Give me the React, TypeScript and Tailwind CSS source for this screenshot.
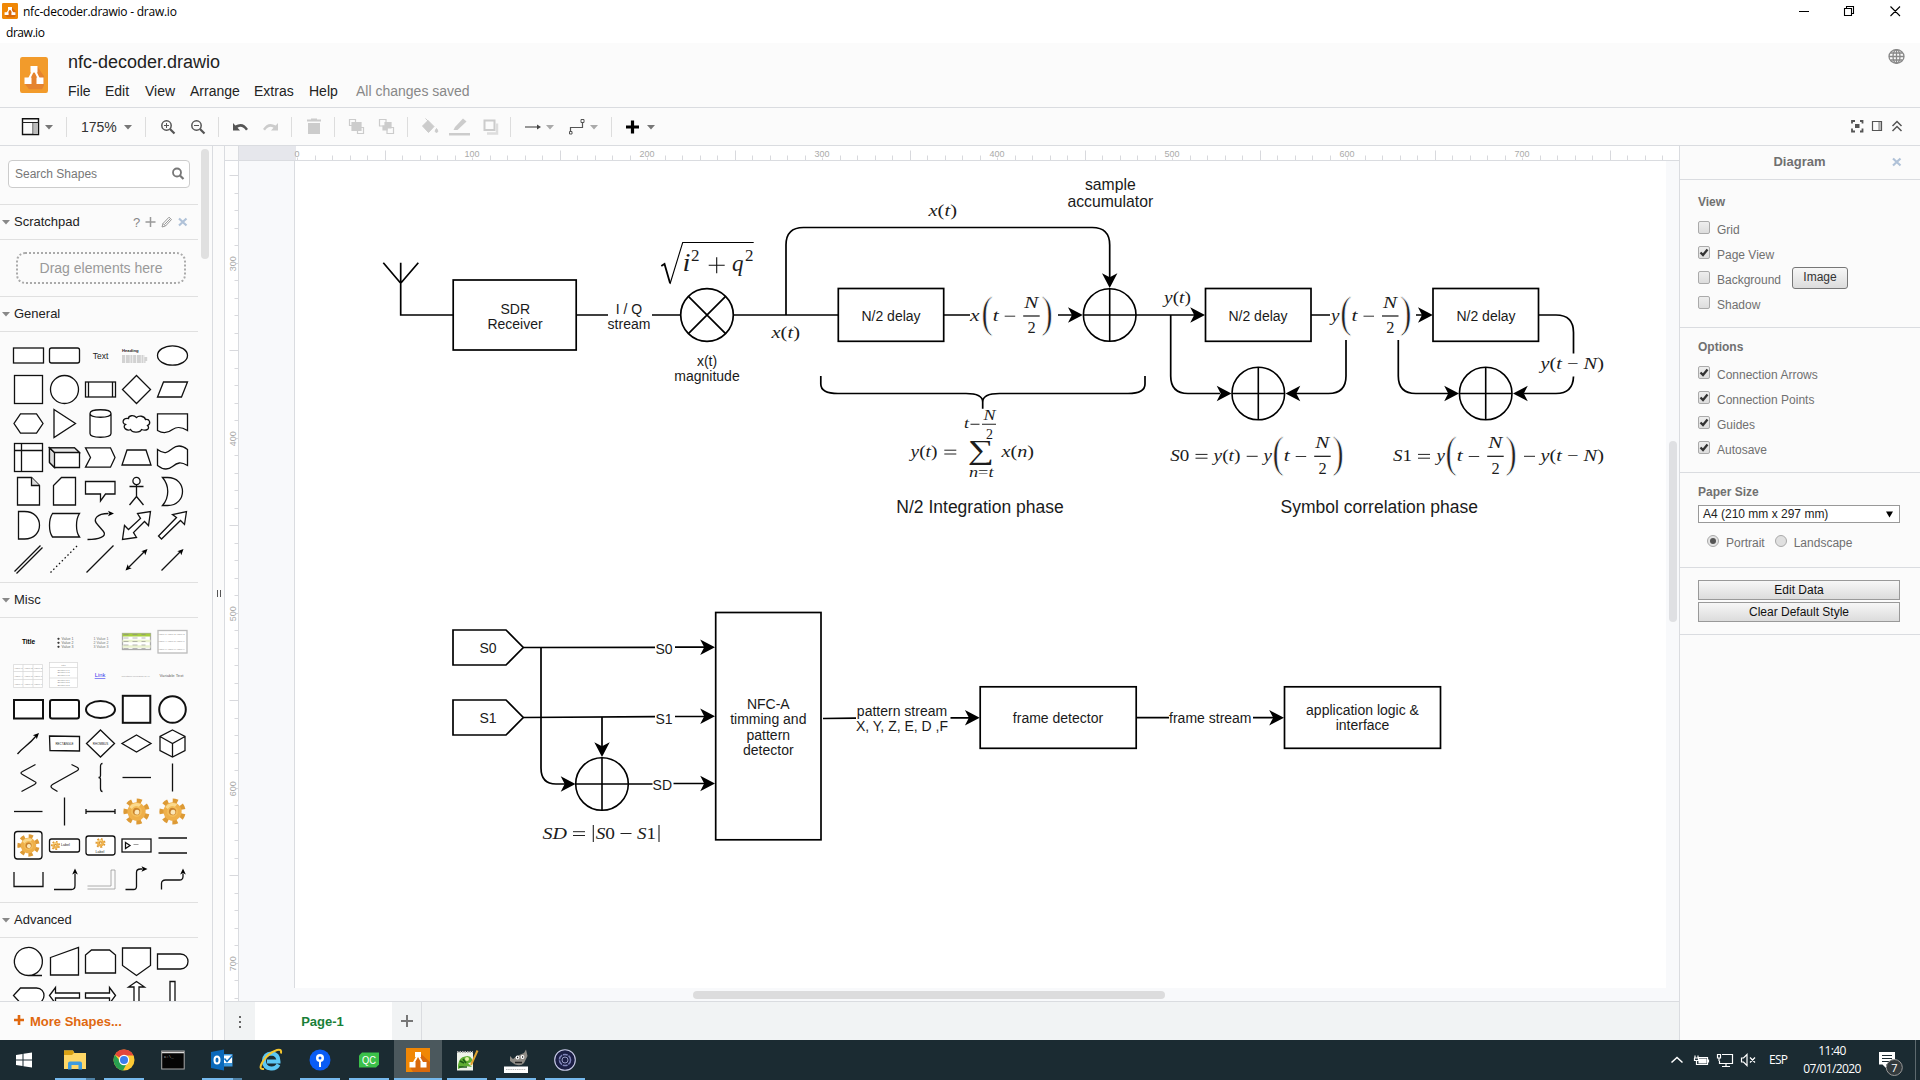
import React from "react";

const sans = "font-['Liberation_Sans',Arial,sans-serif]";

/* ---------- sidebar shape previews ---------- */

function Tip({ x, y, a, s = 1 }: { x: number; y: number; a: number; s?: number }) {
  return <path d="M0 0L-6 -2.8L-4.6 0L-6 2.8Z" fill="#000" stroke="none" transform={`translate(${x} ${y}) rotate(${a}) scale(${s})`} />;
}

function Gear({ x = 0, y = 0, s = 1 }: { x?: number; y?: number; s?: number }) {
  return (
    <g transform={`translate(${x} ${y}) scale(${s}) rotate(12)`} stroke="none">
      <circle r="10.4" fill="none" stroke="#dd9a35" strokeWidth="5.4" strokeDasharray="4.8 4.535" />
      <circle r="9.2" fill="#efb04a" />
      <path d="M-8 -3A8.6 8.6 0 0 1 3 -8L1 -4A5 5 0 0 0 -4 -1Z" fill="#fbd98c" />
      <circle r="5.4" fill="#f3bd5a" />
      <circle r="3.6" fill="#c9822c" />
      <circle cx=".6" cy=".6" r="2.4" fill="#fbe7b8" />
    </g>
  );
}

const tiny = { fill: "#222", stroke: "none", fontFamily: "Liberation Sans, sans-serif" } as const;

const general: React.ReactNode[] = [
  <rect x="-15" y="-7.5" width="30" height="15" />,
  <rect x="-15" y="-7.5" width="30" height="15" rx="2" />,
  <text {...tiny} fontSize="8.5" x="0" y="3" textAnchor="middle">Text</text>,
  <g><text {...tiny} fontSize="4.2" fontWeight="bold" x="-14.5" y="-4">Heading</text><path d="M-14.500.5H8M-14.500 2.500H11M-14.500 4.500H11.500M-14.500 6.500H9" stroke="#888" strokeWidth=".7" strokeDasharray="3 .8 4 .6 2 .7" /></g>,
  <ellipse rx="15" ry="9.700" />,
  <rect x="-14" y="-14" width="28" height="28" />,
  <circle r="14" />,
  <g><rect x="-15" y="-7.5" width="30" height="15" /><path d="M-12 -7.500V7.500M12 -7.500V7.500" /></g>,
  <path d="M0 -14L14 0L0 14L-14 0Z" />,
  <path d="M-9 -7.500H15L9 7.500H-15Z" />,
  <path d="M-8 -9.700H8L14.500 0L8 9.700H-8L-14.500 0Z" />,
  <path d="M-10.500 -14L11 0L-10.500 14Z" />,
  <path d="M-10.500 -10C-10.500 -15 10.500 -15 10.500 -10V10C10.500 15 -10.500 15 -10.500 10ZM-10.500 -10C-10.500 -5 10.500 -5 10.500 -10" />,
  <path d="M-8 -5C-14 -6 -15 0 -11 1C-15 4 -9 8 -6 6C-4 10 4 9 5 6C10 8 14 5 11 2C15 0 13 -5 9 -4C8 -8 2 -8 0 -6C-3 -9 -8 -8 -8 -5Z" />,
  <path d="M-15 -9.700H15V7C7 2 3 4 0 6C-5 10 -10 10 -15 7Z" />,
  <g><rect x="-14" y="-14" width="28" height="28" /><path d="M-7 -14V14M-14 -7H14" /></g>,
  <g><path d="M-15 -9.700H10L15 -5V10H-10L-15 5Z" /><path d="M-15 -9.700L-10 -5V10L-15 5Z" fill="#ddd" /><path d="M-15 -9.700H10L15 -5H-10Z" fill="#e8e8e8" /></g>,
  <path d="M-15 -9.700H10L14.500 0L10 9.700H-15L-10 0Z" />,
  <path d="M-9.500 -7.500H9.500L14.500 7.500H-14.500Z" />,
  <path d="M-15 -8C-7 -2 -4 -6 0 -9C5 -13 10 -12 15 -8V8C8 4 5 5 0 9C-5 13 -10 12 -15 8Z" />,
  <g><path d="M-11 -14H3L11 -6V13.500H-11Z" /><path d="M3 -14V-6H11" fill="#ddd" /></g>,
  <path d="M-3 -14H11V13.500H-11V-6Z" />,
  <path d="M-15 -10H14.500V2.500H5L0 9.500V2.500H-15Z" />,
  <g><circle cy="-10.500" r="3.600" /><path d="M0 -7V5M-7 -5H7M0 5L-7 13.500M0 5L7 13.500" /></g>,
  <path d="M-10 -14H-5C15 -14 15 14 -5 14H-10C-3 6 -3 -6 -10 -14Z" />,
  <path d="M-10 -14H-4C16 -14 16 13.500 -4 13.500H-10Z" />,
  <path d="M-12 -12H15C11 -6 11 6 15 11.500H-12C-16 6 -16 -6 -12 -12Z" />,
  <g><path d="M-13 14C-2 14 7 11 3 6L-3 -1C-8 -6 -4 -12 8 -12" fill="none" /><Tip x={13.500} y={-12} a={0} /></g>,
  <path d="M14 -14L12 0L8 -4L-3 7L0 12L-14 14L-12 0L-8 4L4 -7L1 -12Z" />,
  <path d="M14 -14L12 -1L8 -5L-11 13.500L-14 10.500L4 -8L0 -11Z" />,
  <g><path d="M-14 12L12 -14M-12 14L14 -12" /></g>,
  <path d="M-14 13L13 -14" strokeDasharray="1.500 2.500" />,
  <path d="M-14 13L13 -14" />,
  <g><path d="M-8 8L8 -8" /><Tip x={-11} y={11} a={135} /><Tip x={11} y={-10.500} a={-45} /></g>,
  <g><path d="M-11 11L8 -8" /><Tip x={11} y={-10.500} a={-45} /></g>,
];

const vals = (x: number, y: number, t: string, k: number) => <text key={k} {...tiny} fill="#888" fontSize="2.400" x={x} y={y} textAnchor="middle">{t}</text>;

const misc: React.ReactNode[] = [
  <text {...tiny} fill="#000" fontSize="6.500" fontWeight="bold" x="0" y="2" textAnchor="middle">Title</text>,
  <g>{["Value 1", "Value 2", "Value 3"].map((t, i) => <g key={i}><text {...tiny} fill="#666" fontSize="3.600" x="-3" y={-1.500 + i * 4}>{t}</text><circle cx="-6" cy={-2.700 + i * 4} r="0.400" /></g>)}</g>,
  <g>{["Value 1", "Value 2", "Value 3"].map((t, i) => <text key={i} {...tiny} fill="#777" fontSize="3.600" x="-7" y={-1.500 + i * 4}>{`${i + 1}  ${t}`}</text>)}</g>,
  <g><rect x="-14" y="-8" width="28" height="16" stroke="#aaa" /><path d="M-14 -6.500H14" stroke="#a5cc3f" strokeWidth="3" /><path d="M-14 -.5H14M-14 5H14" stroke="#eaf2cf" strokeWidth="2.500" />{[-7, -3.500, 0, 3.500, 7].map((y) => <path key={y} d={`M-13 ${y}h5M-4 ${y}h5M5 ${y}h4`} stroke="#888" strokeWidth=".6" />)}</g>,
  <g><rect x="-14.500" y="-11" width="29" height="22.500" stroke="#bbb" />{[-7, 0, 8].flatMap((y, r) => [-10, -1, 8].map((x, c) => vals(x, y, `Value ${r * 3 + c + 1}`, r * 3 + c)))}</g>,
  <g><path d="M-15 -11H14V12H-15ZM-5.500 -11V12M4.500 -11V12M-15 -4H14M-15 4H14" stroke="#d4d4d4" strokeWidth=".7" />{[-6.500, 1, 9].flatMap((y, r) => [-10, 0, 9.500].map((x, c) => vals(x, y, `Value ${r * 3 + c + 1}`, r * 3 + c)))}</g>,
  <g><rect x="-15" y="-13" width="28" height="25" stroke="#d4d4d4" strokeWidth=".7" /><path d="M-15 -8H13M-15 2.500H13" stroke="#d4d4d4" strokeWidth=".7" />{["Title", "Section 1.1", "Section 1.2", "Section 1.3", "Section 2.1", "Section 2.2", "Section 2.3"].map((t, i) => vals(-1, [-10, -5, -2.200, .8, 5, 7.800, 10.700][i], t, i))}</g>,
  <text {...tiny} fill="#3333ee" fontSize="5.800" textDecoration="underline" x="-.5" y="1.500" textAnchor="middle">Link</text>,
  <text {...tiny} fill="#999" fontSize="2.200" x="-1" y="1" textAnchor="middle">Timestamp 07/01/2020 11:40</text>,
  <text {...tiny} fill="#666" fontSize="4.200" x="-1" y="1.500" textAnchor="middle">Variable Text</text>,
  <rect x="-14.500" y="-9.500" width="29" height="18.500" strokeWidth="2" />,
  <rect x="-14.500" y="-9.500" width="29" height="18.500" rx="2" strokeWidth="2" />,
  <ellipse rx="14.500" ry="8.500" strokeWidth="2" />,
  <rect x="-13.700" y="-13.700" width="27.500" height="27" strokeWidth="2" />,
  <circle r="13.300" strokeWidth="2" />,
  <g><path d="M-11 10.500C-6 4 0 2 8 -8" /><Tip x={10.500} y={-10.500} a={-45} /></g>,
  <g><path d="M-15 -7.500L15 -7V7.500L-14.500 7Z" /><text {...tiny} fontSize="3" y="1" textAnchor="middle">RECTANGLE</text></g>,
  <g><path d="M0 -13.500L14 0L0 13.500L-14 0Z" /><text {...tiny} fontSize="3" y="1" textAnchor="middle">RHOMBUS</text></g>,
  <path d="M0 -8.500L14.500 0L0 8.500L-14.500 0Z" />,
  <path d="M0 -13.500L12.500 -7V7L0 13.500L-12.500 7V-7ZM-12.500 -7L0 0L12.500 -7M0 0V13.500" />,
  <path d="M7 -13L-6 -6Q-9 -4.500 -6 -3L6 4Q9 5 6 7L-7 14" fill="none" />,
  <path d="M7 -13L13 -10Q15 -8.500 13 -7L-12 7Q-15 9 -12 11L-7 14" fill="none" />,
  <path d="M2 -14Q0 -14 0 -11V-2Q0 0 -2 0Q0 0 0 2V11Q0 14 2 14" fill="none" />,
  <path d="M-14 0H14.500" />,
  <path d="M0 -14V14" />,
  <path d="M-14.500 0H14" />,
  <path d="M0 -14V14" />,
  <path d="M-14.500 0H14.500M-14.500 -2.500V2.500M14.500 -2.500V2.500" />,
  <Gear />,
  <Gear />,
  <g><rect x="-14" y="-14" width="27.500" height="27.500" rx="3" /><Gear s={0.850} /></g>,
  <g><rect x="-15" y="-6.500" width="30" height="13" rx="2" /><Gear x={-9} s={0.350} /><text {...tiny} fontSize="3.600" x="-3.500" y="0">Label</text></g>,
  <g><rect x="-14.500" y="-9.500" width="29" height="19" rx="2.500" /><Gear y={-2.500} s={0.380} /><text {...tiny} fontSize="3.600" x="-5" y="7">Label</text></g>,
  <g><rect x="-14.500" y="-6.500" width="29" height="13" /><path d="M-11 -3L-6.500 0L-11 3Z" /><path d="M-3 -1H2" stroke="#777" strokeWidth=".7" /></g>,
  <path d="M-14 -7.500H14.500M-14 7.500H14.500" />,
  <path d="M-14.500 -7.500V7H14.500V-7.500" fill="none" />,
  <g><path d="M-10.500 10H7Q10.500 10 10.500 6V-6" fill="none" /><Tip x={10.500} y={-11} a={-90} /></g>,
  <path d="M-13 9.500H14.500V-9.500H10.500V6.500H-13" fill="none" stroke="#999" strokeWidth=".8" />,
  <g><path d="M-11 10H-3Q0 10 0 7V-7Q0 -10.500 4 -10.500H6" fill="none" /><Tip x={11} y={-10.500} a={0} /></g>,
  <g><path d="M-11 10V4Q-11 .5 -7 .5H7Q10.500 .5 10.500 -3V-6" fill="none" /><Tip x={10.500} y={-11} a={-90} /></g>,
];

const advanced: React.ReactNode[] = [
  <path d="M13.500 14H0A14 14 0 1 1 6 12.600Q4 14 0 14" />,
  <path d="M-14 -4L14 -14V13.500H-14Z" />,
  <path d="M-9 -11.500H9L15 -6.500V11.500H-15V-6.500Z" />,
  <path d="M-14 -13.500H14V4L0 14L-14 4Z" />,
  <path d="M-15 -7.500H8C18 -7.500 18 7.500 8 7.500H-15Z" />,
  <path d="M-8 -7.500H8C18 -7.500 18 7.500 8 7.500H-8L-15 0Z" />,
  <path d="M-15 0L-9 -8V-2.500H15V2.500H-9V8Z" />,
  <path d="M15 0L9 -8V-2.500H-15V2.500H9V8Z" />,
  <path d="M0 -14L8 -8.500H2.500V14H-2.500V-8.500H-8Z" />,
  <path d="M-2.500 -14V14H2.500V-14Z" />,
];

function ShapeGrid({ items }: { items: React.ReactNode[] }) {
  return (
    <div className="grid w-[198px] grid-cols-[repeat(5,36px)] border-b border-[#e0e0e0] py-1.5 pl-2.5">
      {items.map((s, i) => (
        <svg key={i} width="36" height="34" viewBox="-18.5 -17.5 36 34" fill="#fff" stroke="#111" strokeWidth="1.3" className="block">{s}</svg>
      ))}
    </div>
  );
}

function SectionTitle({ title, children }: { title: string; children?: React.ReactNode }) {
  return (
    <div className="flex h-[35px] w-[198px] shrink-0 items-center border-b border-[#e0e0e0] pl-[2px] text-[13px] text-[#222]">
      <svg width="8" height="5" className="mr-1"><path d="M0 0H8L4 4.500Z" fill="#888" /></svg>
      <span>{title}</span>
      {children}
    </div>
  );
}

function Sidebar() {
  return (
    <aside className="relative flex w-[213px] shrink-0 flex-col border-r border-[#dadce0] bg-[#fbfbfb]">
      <div className="h-[855px] overflow-hidden">
        <div className="flex h-[59px] w-[198px] items-start border-b border-[#e0e0e0] pl-2 pt-[14px]">
          <div className="flex h-7 w-[182px] items-center justify-between rounded border border-[#ccc] bg-white pl-1.5 pr-1 text-[12px] text-[#777]">
            Search Shapes
            <svg width="14" height="14" viewBox="0 0 14 14" fill="none" stroke="#777"><circle cx="6" cy="5.500" r="4" strokeWidth="1.800" /><path d="M9 8.500L12.500 12" strokeWidth="2.200" /></svg>
          </div>
        </div>
        <SectionTitle title="Scratchpad">
          <svg width="60" height="14" className="ml-[52px]" fill="none" stroke="#999">
            <text x="1" y="11.500" fontSize="13" fill="#888" stroke="none">?</text>
            <path d="M13.500 7H23.500M18.500 2V12" strokeWidth="1.500" />
            <path d="M30 12L31 8.500L37 2.200L39.500 4.500L33.500 11Z M31 8.500L33.500 11 M32.500 9.500L38 4" />
            <path d="M47 3.500L54.500 10.500M54.500 3.500L47 10.500" stroke="#b0c2d8" strokeWidth="2.200" />
          </svg>
        </SectionTitle>
        <div className="flex h-[57px] w-[198px] items-center border-b border-[#e0e0e0] pl-4">
          <div className="flex h-8 w-[170px] items-center justify-center rounded-[9px] border-2 border-dotted border-[#aaa] text-[14px] text-[#999]">Drag elements here</div>
        </div>
        <SectionTitle title="General" />
        <ShapeGrid items={general} />
        <SectionTitle title="Misc" />
        <ShapeGrid items={misc} />
        <SectionTitle title="Advanced" />
        <ShapeGrid items={advanced} />
      </div>
      <div className="flex h-[39px] items-center border-t border-[#dadce0] pl-[14px] pt-px text-[13px] font-bold text-[#e0680f]">
        <svg width="10" height="10" className="mb-1 mr-1.5"><path d="M5 0V10M0 5H10" stroke="#e0680f" strokeWidth="2.600" /></svg>
        More Shapes...
      </div>
      <div className="absolute left-[201px] top-[3px] h-[110px] w-2 rounded-full bg-[#e0e0e0]" />
    </aside>
  );
}

/* ---------- diagram ---------- */

/* Math run: letters are set in italics, everything else upright. */
function Mth({ x, y, w, s = 17, children }: { x: number; y: number; w: number; s?: number; children: string }) {
  const runs = children.match(/[A-Za-z]+|[^A-Za-z]+/g) ?? [];
  return (
    <text x={x} y={y} fontSize={s} textLength={w} lengthAdjust="spacingAndGlyphs" fill="#1c1c1c" fontFamily="Liberation Serif, serif" xmlSpace="preserve">
      {runs.map((r, i) => <tspan key={i} fontStyle={/[A-Za-z]/.test(r) ? "italic" : "normal"}>{r}</tspan>)}
    </text>
  );
}

function Lbl({ x, y, s = 14, children }: { x: number; y: number; s?: number; children: string }) {
  return <text x={x} y={y} fontSize={s} textAnchor="middle" fill="#1a1a1a" fontFamily="Liberation Sans, Arial, sans-serif">{children}</text>;
}

function Arrow({ x, y, a = 0 }: { x: number; y: number; a?: number }) {
  return <path d="M0 0L-14.800 -7.700L-10.800 0L-14.800 7.700Z" transform={`translate(${x} ${y}) rotate(${a})`} fill="#000" />;
}

function Plus({ x, y }: { x: number; y: number }) {
  return <g stroke="#000" strokeWidth="1.600" fill="#fff"><circle cx={x} cy={y} r="26.300" /><path d={`M${x - 26.300} ${y}H${x + 26.300}M${x} ${y - 26.300}V${y + 26.300}`} /></g>;
}

/* "( t − N/2 )" with tall parentheses; x is the left edge of the t. */
function Half({ x, y }: { x: number; y: number }) {
  const tall = { fontSize: 45, fontFamily: "Liberation Serif, serif", fill: "#222", stroke: "#fff", strokeWidth: 0.9 } as const;
  return (
    <g transform={`translate(${x} ${y})`}>
      <text {...tall} transform="translate(-11.5 5.900) scale(.78 1)">(</text>
      <Mth x={0} y={0} w={6}>t</Mth>
      <path d="M12 -4.800H22.500" stroke="#333" strokeWidth="1" />
      <Mth x={31.500} y={-13.300} w={14}>N</Mth>
      <path d="M30.500 -5H47" stroke="#111" strokeWidth="1.200" />
      <Mth x={34.700} y={12.300} w={8.200}>2</Mth>
      <text {...tall} transform="translate(48.600 5.900) scale(.78 1)">)</text>
    </g>
  );
}

function Diagram() {
  return (
    <svg width="1371" height="827" viewBox="295 161 1371 827" className="block">
      <g fill="none" stroke="#000" strokeWidth="1.700">
        <path d="M383.300 262.700L400.700 283.300L418.300 262.700M400.700 262.700V315H453" />
        <rect x="453.200" y="280" width="123" height="70" />
        <path d="M576 315H608M652 315H680.500M733.500 315H838.500" />
        <circle cx="707" cy="315" r="26.300" />
        <path d="M688.400 296.400L725.600 333.600M725.600 296.400L688.400 333.600" />
        <path d="M786 315V245Q786 227.500 803.500 227.500H1092.200Q1109.700 227.500 1109.700 245V278" />
        <rect x="838.300" y="288.500" width="105.400" height="52.800" />
        <path d="M943.700 315H970M1058 315H1072M1136 315H1195" />
        <path d="M1170.700 315V376Q1170.700 393.500 1188 393.500H1220" />
        <rect x="1205.500" y="288.500" width="105.500" height="52.800" />
        <path d="M1311 315H1330M1416 315H1422" />
        <path d="M1346 340V376Q1346 393.500 1328.500 393.500H1296M1398.300 340V376Q1398.300 393.500 1415.800 393.500H1449" />
        <rect x="1433" y="288.500" width="105.500" height="52.800" />
        <path d="M1538.300 315H1556Q1573.500 315 1573.500 332.500V353.500M1573.500 376.500Q1573 393.500 1556 393.500H1524" />
        <path d="M820.800 376V384Q820.800 393.500 838 393.500H966Q982.700 393.500 982.700 402V408.700M982.700 402Q982.700 393.500 999.500 393.500H1128Q1145 393.500 1145 384V376" />
        <path d="M453 630H506L523.300 647.500L506 665H453ZM453 700H506L523.300 717.500L506 735H453Z" />
        <path d="M523.300 647.500L655 647.300M675 647.200H705M523.300 717.500L655 716.600M675 716.500H705M628.500 784H652.500M673.500 783.500H705" />
        <path d="M541 647.500V768Q541 784 556 784H565M602 717V747" />
        <rect x="715.700" y="612.500" width="105.300" height="227.300" />
        <path d="M823 718.500L856 718.200M950.500 717.800H970M1136.500 717.700H1169M1253 717.700H1275" />
        <rect x="980.200" y="686.800" width="156" height="61.500" />
        <rect x="1284.500" y="686.800" width="156" height="61.500" />
        <path d="M661.300 266L664.500 264L670 283" strokeWidth="1.800" />
        <path d="M670 284L682.700 242.500H753.700" strokeWidth="1.100" />
      </g>
      <Plus x={1109.700} y={315} /><Plus x={1258.300} y={393.500} /><Plus x={1485.700} y={393.500} /><Plus x={602} y={784} />
      <Arrow x={1109.700} y={288} a={90} /><Arrow x={1082.800} y={315} /><Arrow x={1205} y={315} /><Arrow x={1432.800} y={315} />
      <Arrow x={1231.500} y={393.500} /><Arrow x={1285.500} y={393.500} a={180} /><Arrow x={1459} y={393.500} /><Arrow x={1513} y={393.500} a={180} />
      <Arrow x={715} y={647.200} /><Arrow x={715} y={716.300} /><Arrow x={715} y={783.500} /><Arrow x={575.500} y={784} /><Arrow x={602} y={757} a={90} />
      <Arrow x={979.700} y={717.700} /><Arrow x={1284} y={717.700} />

      <Lbl x={515.300} y={313.500}>SDR</Lbl><Lbl x={515} y={328.500}>Receiver</Lbl>
      <Lbl x={629} y={313.500}>I / Q</Lbl><Lbl x={629} y={328.500}>stream</Lbl>
      <Lbl x={707} y={365.500}>x(t)</Lbl><Lbl x={707} y={380.500}>magnitude</Lbl>
      <Lbl x={1110.300} y={190} s={15.750}>sample</Lbl><Lbl x={1110.300} y={207} s={15.750}>accumulator</Lbl>
      <Lbl x={891} y={321}>N/2 delay</Lbl><Lbl x={1258} y={321}>N/2 delay</Lbl><Lbl x={1486} y={321}>N/2 delay</Lbl>
      <Lbl x={980} y={512.700} s={17.500}>N/2 Integration phase</Lbl><Lbl x={1379.300} y={512.700} s={17.500}>Symbol correlation phase</Lbl>
      <Lbl x={488} y={653}>S0</Lbl><Lbl x={488} y={723}>S1</Lbl>
      <Lbl x={664} y={654}>S0</Lbl><Lbl x={664} y={724}>S1</Lbl><Lbl x={662.300} y={790}>SD</Lbl>
      <Lbl x={768.300} y={708.500}>NFC-A</Lbl><Lbl x={768.300} y={724}>timming and</Lbl><Lbl x={768.300} y={739.500}>pattern</Lbl><Lbl x={768.300} y={755}>detector</Lbl>
      <Lbl x={902} y={716}>pattern stream</Lbl><Lbl x={902} y={731}>X, Y, Z, E, D ,F</Lbl>
      <Lbl x={1058} y={723}>frame detector</Lbl><Lbl x={1210.300} y={723}>frame stream</Lbl>
      <Lbl x={1362.500} y={715}>application logic &amp;</Lbl><Lbl x={1362.500} y={730}>interface</Lbl>

      <Mth x={682.500} y={271.300} w={8} s={25}>i</Mth><Mth x={691} y={260.700} w={8.500} s={17}>2</Mth>
      <path d="M708.700 265.300H724.700M716.700 257.300V273.300" stroke="#111" strokeWidth="1.100" />
      <Mth x={732} y={271.300} w={11.500} s={24}>q</Mth><Mth x={745} y={260.700} w={8.500} s={17}>2</Mth>
      <Mth x={771.500} y={337.500} w={28.500}>x(t)</Mth><Mth x={928.500} y={215.800} w={28.500}>x(t)</Mth>
      <Mth x={970} y={321} w={9.500}>x</Mth><Half x={992.700} y={321} />
      <Mth x={1164} y={302.800} w={27}>y(t)</Mth>
      <Mth x={1331} y={321} w={8.500}>y</Mth><Half x={1351.500} y={321} />
      <Mth x={1540.500} y={368.700} w={63.500}>y(t − N)</Mth>
      <Mth x={910.500} y={457} w={27}>y(t)</Mth>
      <path d="M944.300 450.200H956.300M944.300 454H956.300M1195.500 454.400H1207.500M1195.500 458.200H1207.500M1418 454.400H1430M1418 458.200H1430M573 831.700H585M573 835.500H585" stroke="#222" strokeWidth="1" />
      <path d="M1246.700 456.300H1257.700M1524 456.300H1535M620.500 833.500H631.500" stroke="#222" strokeWidth="1" />
      <Mth x={968} y={459} w={26} s={27}>∑</Mth>
      <Mth x={964} y={427.500} w={5} s={14}>t</Mth>
      <path d="M970.500 424.300H979.500M982 424.300H996" stroke="#222" strokeWidth="1.100" />
      <Mth x={983.500} y={420} w={12} s={14.500}>N</Mth><Mth x={986} y={439} w={7} s={14.500}>2</Mth>
      <Mth x={969} y={476.500} w={24.500} s={14}>n=t</Mth>
      <Mth x={1001.500} y={457} w={32.500}>x(n)</Mth>
      <Mth x={1170.300} y={461.300} w={19}>S0</Mth><Mth x={1213.500} y={461.300} w={27}>y(t)</Mth><Mth x={1263.500} y={461.300} w={8.500}>y</Mth><Half x={1283.700} y={461.300} />
      <Mth x={1393} y={461.300} w={19}>S1</Mth><Mth x={1436.500} y={461.300} w={8.500}>y</Mth><Half x={1456.700} y={461.300} /><Mth x={1540.500} y={461.300} w={63.500}>y(t − N)</Mth>
      <Mth x={542.500} y={838.500} w={24.500}>SD</Mth><Mth x={595.700} y={838.500} w={19.300}>S0</Mth><Mth x={637} y={838.500} w={19}>S1</Mth>
      <path d="M593.300 825V842M659 825V842" stroke="#222" strokeWidth="1.100" />
    </svg>
  );
}

/* ---------- canvas with rulers ---------- */

function HRuler() {
  const ticks = Array.from({ length: 79 }, (_, i) => i);
  return (
    <svg width="1440" height="14" viewBox="239 146 1440 14" className="block bg-white">
      <rect x="239" y="146" width="57" height="14" fill="#e6e7ec" />
      {ticks.map((i) => <path key={i} d={`M${Math.round(297 + i * 17.5) + 0.5} ${i % 10 === 5 ? 150.500 : i % 10 === 0 ? 157.500 : 155.500}V160`} stroke="#d8d9dd" />)}
      {[0, 1, 2, 3, 4, 5, 6, 7].map((i) => <text key={i} x={297 + i * 175} y="156.500" fontSize="9" fill="#aaa" textAnchor="middle" fontFamily="Liberation Sans">{i * 100}</text>)}
    </svg>
  );
}

function VRuler() {
  const ticks = Array.from({ length: 48 }, (_, i) => i);
  return (
    <svg width="13" height="840" viewBox="225 161 13 840" className="block">
      {ticks.map((i) => <path key={i} d={`M${i % 10 === 0 ? 229.500 : i % 10 === 5 ? 236 : 234.500} ${Math.floor(175.5 + i * 17.5) + 0.5}H238`} stroke="#d8d9dd" />)}
      {[0, 1, 2, 3, 4].map((i) => <text key={i} transform={`translate(235.500 ${263.700 + i * 175}) rotate(-90)`} fontSize="9" fill="#aaa" textAnchor="middle" fontFamily="Liberation Sans">{300 + i * 100}</text>)}
    </svg>
  );
}

function Canvas() {
  return (
    <main className="flex w-[1454px] shrink-0 flex-col">
      <div className="flex h-[15px] shrink-0 border-b border-[#dadce0]">
        <div className="w-[14px] shrink-0 border-r border-[#dadce0] bg-[#fbfbfb]" />
        <HRuler />
      </div>
      <div className="relative flex h-[840px] shrink-0">
        <div className="w-[14px] shrink-0 border-r border-[#dadce0] bg-white"><VRuler /></div>
        <div className="grow bg-[#f8f9fb] pl-[55px]">
          <div className="h-[827px] w-[1372px] border-l border-[#dadce0] bg-white"><Diagram /></div>
        </div>
        <div className="absolute left-[1444px] top-[280px] h-[181px] w-2 rounded-full bg-[#dfe0e3]" />
        <div className="absolute left-[468px] top-[830px] h-2 w-[472px] rounded-full bg-[#dcdcdd]" />
      </div>
      <div className="flex h-[39px] border-t border-[#dadce0] bg-[#f1f3f4] text-[13px]">
        <div className="flex w-[30px] items-center justify-center pt-px">
          <svg width="4" height="14"><path d="M1 1h2v2h-2ZM1 6h2v2h-2ZM1 11h2v2h-2Z" fill="#666" /></svg>
        </div>
        <div className="flex w-[137px] items-center justify-center bg-white pr-0.5 pt-px font-bold text-[#188038]">Page-1</div>
        <div className="flex w-[30px] items-center justify-center border-r border-[#dadce0]">
          <svg width="13" height="12"><path d="M7 0V12M1 6H13" stroke="#777" strokeWidth="2" /></svg>
        </div>
      </div>
    </main>
  );
}

/* ---------- format panel ---------- */

function Check({ on, label, children }: { on?: boolean; label: string; children?: React.ReactNode }) {
  return (
    <div className="flex h-[25px] items-center">
      <span className="mb-1 flex h-[13px] w-3 items-center justify-center rounded-[2px] border border-[#aaa] bg-gradient-to-b from-[#eee] to-[#ddd]">
        {on && <svg width="10" height="9" fill="none" stroke="#333"><path d="M1.500 4.500L4 7L8.500 1.500" strokeWidth="2.300" /></svg>}
      </span>
      <span className="ml-[7px] pt-px">{label}</span>
      {children}
    </div>
  );
}

const btn = "flex h-5 w-[202px] items-center justify-center border border-[#999] bg-gradient-to-b from-[#f7f7f7] to-[#dcdcdc] text-[#111]";

function FormatPanel() {
  return (
    <aside className="grow border-l border-[#dadce0] bg-[#fbfbfb] text-[12px] text-[#707070]">
      <div className="flex h-[34px] items-center border-b border-[#dadce0] pb-0.5 text-[13px] font-bold">
        <span className="w-[240px] pl-[21px] pr-[22px] text-center">Diagram</span>
        <svg width="10" height="10" className="-ml-[28px]"><path d="M1 1.500L8.500 8.500M8.500 1.500L1 8.500" stroke="#b0c2d8" strokeWidth="2.200" /></svg>
      </div>
      <section className="h-[148px] border-b border-[#dadce0] pl-[18px] pt-[15px]">
        <h3 className="mb-[7px] h-[15px] font-bold leading-[15px]">View</h3>
        <Check label="Grid" />
        <Check label="Page View" on />
        <Check label="Background">
          <span className="-mt-[3px] ml-[11px] flex h-[22px] w-14 items-center justify-center rounded-[3px] border border-[#777] bg-gradient-to-b from-[#f7f7f7] to-[#dcdcdc] pb-[3px] text-[#333]">Image</span>
        </Check>
        <Check label="Shadow" />
      </section>
      <section className="h-[145px] border-b border-[#dadce0] pl-[18px] pt-3">
        <h3 className="mb-[7px] h-[15px] font-bold leading-[15px]">Options</h3>
        <Check label="Connection Arrows" on />
        <Check label="Connection Points" on />
        <Check label="Guides" on />
        <Check label="Autosave" on />
      </section>
      <section className="h-[95px] border-b border-[#dadce0] pl-[18px] pt-3">
        <h3 className="mb-[5px] h-[15px] font-bold leading-[15px]">Paper Size</h3>
        <div className="flex h-[18px] w-[202px] items-center justify-between border border-[#999] bg-white pl-1 pr-1.5 text-[#222]">
          A4 (210 mm x 297 mm)
          <svg width="7" height="7"><path d="M0 .5H7L3.500 6.500Z" fill="#000" /></svg>
        </div>
        <div className="flex h-10 items-center pl-[9px]">
          <span className="mb-1 mr-[7px] flex size-3 items-center justify-center rounded-full border border-[#aaa] bg-[#e4e4e4]"><span className="size-1.5 rounded-full bg-[#555]" /></span>
          Portrait
          <span className="mb-1 ml-[10px] mr-[7px] size-3 rounded-full border border-[#aaa] bg-[#e0e0e0]" />
          Landscape
        </div>
      </section>
      <section className="flex h-[67px] flex-col gap-0.5 border-b border-[#dadce0] pl-[18px] pt-3">
        <div className={btn}>Edit Data</div>
        <div className={btn}>Clear Default Style</div>
      </section>
    </aside>
  );
}

/* ---------- header ---------- */

function Logo({ className, light }: { className: string; light?: boolean }) {
  return (
    <svg viewBox="0 0 28 28" preserveAspectRatio="none" className={className}>
      <rect width="28" height="28" rx="2" fill={light ? "#f29b2b" : "#f08705"} />
      <path d="M17 7L24 15V22L22 25H9L5 21L14 12Z" fill={light ? "#e5832f" : "#d9690c"} />
      <path d="M14 9L8.500 18M14 9L19.500 18" stroke="#fff" strokeWidth="2" />
      <path d="M10.500 7h7v5h-7ZM4.500 16h7v5h-7ZM16.500 16h7v5h-7Z" fill="#fff" />
    </svg>
  );
}

function Toolbar() {
  const g = "#ccc";
  return (
    <div className="h-[38px] shrink-0 border-b border-[#dadce0] bg-[#fbfbfb]">
      <div className="flex h-full items-center text-[14px] text-[#333]">
        <svg width="81" height="37" viewBox="0 108 81 37" fill="none">
          <path d="M22.500 118.700H38.500V134.500H22.500Z" stroke="#111" strokeWidth="1.400" /><path d="M22 122.500H39M33 122V134" stroke="#222" /><rect x="33.500" y="123" width="4.500" height="11" fill="#bbb" />
          <path d="M45 125H53L49 129.500Z" fill="#777" /><path d="M66.500 117V137" stroke="#ddd" />
        </svg>
        <span className="w-[39px] pt-px">175%</span>
        <svg width="540" height="37" viewBox="120 108 540 37" fill="none">
          <path d="M124 125H132L128 129.500Z M647 125H655L651 129.500Z" fill="#777" />
          <path d="M546 125H554L550 129.500Z M590 125H598L594 129.500Z" fill="#aaa" />
          <path d="M145.500 117V137M218.500 117V137M291.500 117V137M334.500 117V137M407.500 117V137M510.500 117V137M611.500 117V137" stroke="#ddd" />
          <g stroke="#555"><circle cx="166.500" cy="125.500" r="4.700" strokeWidth="1.500" /><path d="M170 129L174.500 133.500" strokeWidth="2.200" /><path d="M164 125.500H169M166.500 123V128" />
            <circle cx="196.500" cy="125.500" r="4.700" strokeWidth="1.500" /><path d="M200 129L204.500 133.500" strokeWidth="2.200" /><path d="M194 125.500H199" /></g>
          <path d="M233 123L235.300 125.500Q243 121 248 129L246 130.500Q242 125 237.500 127.800L240 130.500H233Z" fill="#555" />
          <path d="M278 123L275.700 125.500Q268 121 263 129L265 130.500Q269 125 273.500 127.800L271 130.500H278Z" fill={g} />
          <path d="M307 119.500H311V118.500H317V119.500H321V121.500H307ZM308 123H320V134H308Z" fill={g} />
          <g stroke={g} strokeWidth="1.200"><path d="M349.500 119.500H355.500V125.500H349.500ZM357.500 127.500H363.500V133.500H357.500Z" /><path d="M352 122.500H361V130.500H352Z" fill={g} /><path d="M379.500 119.500H386V126H379.500ZM387 127.500H393.500V133.500H387Z" /><path d="M385 122.500H391V128H385ZM383 126H387V130H383Z" fill={g} /></g>
          <path d="M422.500 126L428 120.500L434 126.500L428.500 132.500ZM436.500 128.500Q439 132 436.500 132.500Q434 132 436.500 128.500ZM425.500 118.500L430 123" fill={g} stroke={g} />
          <path d="M449 133H470V135.500H449Z" fill={g} /><path d="M453.500 130L455 127L463 118.500L466.500 121.500L457.500 130Z" fill={g} />
          <path d="M484.500 120.500H494.500V130H484.500Z" stroke={g} strokeWidth="2" /><path d="M497 123.500V133.500H487" stroke="#ddd" strokeWidth="2.500" />
          <path d="M525 127H539" stroke="#555" strokeWidth="1.200" /><path d="M541 127L537 124.500V129.500Z" fill="#444" />
          <path d="M570.500 131V127.500H582.500V123" stroke="#555" strokeWidth="1.200" /><path d="M569.500 131.500H572V134H569.500ZM581 119.500H584V122.500H581Z" stroke="#555" fill="#fff" />
          <path d="M632.500 120.500V133.500M626 127H639" stroke="#000" strokeWidth="3.200" />
        </svg>
        <svg width="70" height="37" viewBox="1850 108 70 37" fill="none" className="ml-auto" stroke="#555">
          <path d="M1852 123.500V121H1855M1860 121H1862.500V123.500M1862.500 128.500V131.500H1860M1855 131.500H1852V128.500" strokeWidth="1.800" /><rect x="1855.500" y="124.500" width="3.500" height="3" fill="#555" />
          <path d="M1872.500 121.500H1881.500V130.500H1872.500Z" strokeWidth="1.200" /><path d="M1879.500 122V130" stroke="#aaa" strokeWidth="2.500" />
          <path d="M1892.500 126L1897 121.500L1901.500 126M1892.500 131L1897 126.500L1901.500 131" strokeWidth="1.500" />
        </svg>
      </div>
    </div>
  );
}

function Header() {
  return (
    <>
      <div className="flex h-[22px] shrink-0 items-center bg-white pl-[2px] pt-px font-['Open_Sans',sans-serif] text-[12px] text-black">
        <Logo className="mb-px mr-[5px] size-4" />
        <span className="tracking-[-0.24px]">nfc-decoder.drawio - draw.io</span>
        <svg width="120" height="20" className="mb-px ml-auto mr-1 shrink-0" viewBox="1796 0 120 20" fill="none" stroke="#000" strokeWidth="1.100">
          <path d="M1799 10.500H1809M1844.500 7.500H1851.500V14.500H1844.500ZM1846.500 7.500V5.500H1853.500V12.500H1851.500M1890.500 5.500L1900 15M1900 5.500L1890.500 15" />
        </svg>
      </div>
      <div className="flex h-[21px] shrink-0 items-center bg-white pl-1.5 pt-px font-['Open_Sans',sans-serif] text-[12px] tracking-[-0.45px] text-black">draw.io</div>
      <header className="flex h-[65px] shrink-0 border-b border-[#dadce0] bg-[#fbfbfb]">
        <Logo className="ml-5 mt-[14px] h-9 w-7" light />
        <div className="ml-5 pt-[8px] text-[#222]">
          <div className="h-[22px] text-[18px] leading-[22px]">nfc-decoder.drawio</div>
          <nav className="mt-2 flex h-5 items-center text-[14px]">
            <span className="w-[37px]">File</span><span className="w-[40px]">Edit</span><span className="w-[45px]">View</span><span className="w-[64px]">Arrange</span><span className="w-[55px]">Extras</span><span className="w-[47px]">Help</span>
            <span className="text-[#888]">All changes saved</span>
          </nav>
        </div>
        <svg width="17" height="15" className="ml-auto mr-[15px] mt-1.5" fill="none" stroke="#888" strokeWidth="1.300"><ellipse cx="8.500" cy="7.500" rx="7.500" ry="6.800" /><ellipse cx="8.500" cy="7.500" rx="3.500" ry="6.800" /><path d="M8.500 1V14M1 7.500H16M2.500 4H14.500M2.500 11H14.500" /></svg>
      </header>
      <Toolbar />
    </>
  );
}

/* ---------- taskbar ---------- */

const apps: { icon: React.ReactNode; bar?: "full" | "split"; active?: boolean }[] = [
  { icon: <path d="M4 7L10.500 6V11.500H4ZM11.500 5.800L20 4.500V11.500H11.500ZM4 12.500H10.500V18L4 17ZM11.500 12.500H20V19.500L11.500 18.200Z" fill="#fff" /> },
  { bar: "split", icon: <g><path d="M1 2.500H10L11.500 5H23V21H1Z" fill="#ffd766" /><path d="M1 2.500H10L11 5L9 7H1Z" fill="#d9a114" /><path d="M5 21.500V15.500Q5 13.500 7 13.500H17Q19 13.500 19 15.500V21.500H15.500V17H8.500V21.500Z" fill="#3d9be0" /></g> },
  { bar: "full", icon: <g><circle cx="12" cy="12" r="10.500" fill="#fcc934" /><path d="M12 12L2.900 6.800A10.500 10.500 0 0 1 21.500 7.500H12Z" fill="#e2463a" /><path d="M2.900 6.800A10.500 10.500 0 0 0 11 22.400L15.500 14L12 12L8 13Z" fill="#28a050" /><circle cx="12" cy="12" r="5.200" fill="#fff" /><circle cx="12" cy="12" r="4" fill="#3b7ded" /></g> },
  { icon: <g><rect x=".7" y="3" width="22.500" height="18" fill="#050505" stroke="#aaa" /><path d="M1 4.500H23" stroke="#ddd" strokeWidth="1.500" /><text x="3" y="10" fontSize="4" fill="#bbb" fontFamily="Liberation Mono">C:\_</text></g> },
  { bar: "split", icon: <g><path d="M13 6H22.500V18.500H13Z" fill="#3a96dc" /><path d="M14 7.500H22V15H14Z" fill="#fff" /><path d="M14.500 10.500L17 13.500L22 8" stroke="#0e6fc0" fill="none" strokeWidth="1.500" /><path d="M1 4L14 1.500V22.500L1 20Z" fill="#0a69bb" /><ellipse cx="7" cy="12" rx="2.500" ry="3.500" fill="none" stroke="#fff" strokeWidth="2" /></g> },
  { icon: <g fill="none"><path d="M19.500 16.500Q17 21 12 20.500Q5 20 5 12.500Q5.500 6 12.500 5.500Q19.500 6 19.500 13.500H8" stroke="#5cc8f5" strokeWidth="4" /><path d="M5 21Q-1 22 3.500 14Q9 5 18 2Q23 .5 22 5.500" stroke="#f6c62e" strokeWidth="2" /></g> },
  { bar: "full", icon: <g><circle cx="12" cy="12" r="10.500" fill="#0a5cf5" /><circle cx="12" cy="10" r="4" fill="#fff" /><circle cx="12" cy="10" r="1.500" fill="#0a5cf5" /><path d="M11 13H13V19H11Z" fill="#fff" /></g> },
  { bar: "full", icon: <g><path d="M5 4.500H22V16.500L19 19.500H2V7.500Z" fill="#3bc04a" /><text x="12" y="16" fontSize="11" textAnchor="middle" fill="#fff" fontFamily="Liberation Sans" textLength="14" lengthAdjust="spacingAndGlyphs">QC</text></g> },
  { bar: "full", active: true, icon: <g><rect width="24" height="24" fill="#f08705" /><path d="M14 5L24 14V24H7L4 19L12 10Z" fill="#d9690c" /><path d="M12 7L7 16M12 7L17 16" stroke="#fff" strokeWidth="1.800" /><path d="M9 4H15V9H9ZM3.500 14H9.500V19.500H3.500ZM14.500 14H20.500V19.500H14.500Z" fill="#fff" /></g> },
  { bar: "full", icon: <g><path d="M2 4H18V22.500H2Z" fill="#eef3ea" /><path d="M2 4H18" stroke="#aaa" strokeWidth="2" strokeDasharray="1.500 1" /><path d="M3 17Q4 9 10 8.500Q15 7 17 11Q18 15 13 15L17 19L10 18L3 21Z" fill="#5fae33" /><circle cx="12" cy="11" r="2" fill="#e2f3a8" /><path d="M5 13L9 15M4 19H12M8 11L11 15" stroke="#1d5c17" strokeWidth="1.500" /><path d="M22.500 2.500L16 17" stroke="#e0a22f" strokeWidth="2" /></g> },
  { bar: "full", icon: <g><path d="M6 8L9 11L13 8L20 5L22 1.500L23.500 8L20 15Q17 18.500 11 16.500L6 13Z" fill="#8f8c86" /><circle cx="13.500" cy="9.500" r="1.900" fill="#fff" /><circle cx="18.500" cy="9" r="1.900" fill="#fff" /><path d="M13 9.500h1.200M18 9h1.200M11 14.500H18" stroke="#222" strokeWidth="1.300" /><rect y="18.500" width="24" height="6.500" fill="#fff" /><path d="M2 21.500H22" stroke="#bbb" strokeDasharray="1.500 .7" /></g> },
  { bar: "full", icon: <g fill="none" stroke="#c9cbe8"><circle cx="12" cy="12" r="10.300" fill="#1b1e45" strokeWidth="1.100" /><circle cx="12" cy="12" r="5.600" stroke="#7f84b8" strokeWidth="1.500" strokeDasharray="5 .9" /><circle cx="12" cy="12" r="3" stroke="#a6a9d2" strokeWidth=".9" /></g> },
];

function Taskbar() {
  return (
    <footer className="flex h-10 shrink-0 bg-[#1b2b32] font-['Open_Sans',sans-serif] text-[12px] text-white">
      <div className="flex gap-px pl-[2px]">
        {apps.map((a, i) => (
          <div key={i} className={`flex w-12 flex-col items-center justify-between pt-2 ${a.active ? "bg-[#4b585d]" : ""}`}>
            <svg width="24" height="25" viewBox="0 0 24 25" className={i === 0 ? "-ml-[5px]" : ""}>{a.icon}</svg>
            <div className={`flex h-0.5 ${a.active ? "w-12" : "w-10"}`}>
              {a.bar && <div className="grow bg-[#76b9ed]" />}
              {a.bar === "split" && <div className="w-[9px] bg-[#4f81a5]" />}
            </div>
          </div>
        ))}
      </div>
      <div className="ml-auto flex h-full items-center">
        <svg width="90" height="40" viewBox="1670 1040 90 40" fill="none" stroke="#fff" strokeWidth="1.200">
          <path d="M1671.500 1062.500L1677 1057.500L1682.500 1062.500" strokeWidth="1.500" />
          <path d="M1698 1057.500H1707.500V1064.500H1696.500V1062M1708.500 1059.500V1062.500M1694 1058H1699M1694.500 1058V1060.500H1698.500V1058M1695 1055.500V1058M1698 1055.500V1058M1696.500 1060V1063" /><path d="M1699 1059H1706V1063H1699Z" fill="#fff" />
          <path d="M1722 1054.500H1732.500V1063.500H1719.500V1061M1726 1064V1066.500M1722 1066.500H1730M1717.500 1054.500H1720.500V1058H1717.500ZM1719 1058V1061" />
          <path d="M1741.500 1058H1743.500L1747 1054.500V1065.500L1743.500 1062H1741.500ZM1750 1057.500L1755 1062.500M1755 1057.500L1750 1062.500" />
        </svg>
        <span className="ml-[9px] w-[33px] tracking-[-0.7px]">ESP</span>
        <div className="w-[60px] text-center leading-[18px] tracking-[-0.6px]">
          <div>11:40</div>
          <div className="whitespace-nowrap">07/01/2020</div>
        </div>
        <svg width="45" height="40" viewBox="1870 1040 45 40" className="ml-2">
          <path d="M1879 1052H1895V1064.500H1886V1068L1882.500 1064.500H1879Z" fill="#fff" /><path d="M1882 1055.500H1892M1882 1058.500H1892M1882 1061.500H1889" stroke="#1b2b32" />
          <circle cx="1894.300" cy="1067.500" r="8" fill="#333a3d" stroke="#999" /><text x="1894.300" y="1071.500" fontSize="11" textAnchor="middle" fill="#fff">7</text>
        </svg>
        <div className="mr-1 h-full w-px bg-[#5d696e]" />
      </div>
    </footer>
  );
}

export default function App() {
  return (
    <div className={`flex h-[1080px] w-[1920px] flex-col overflow-hidden bg-white ${sans}`}>
      <Header />
      <div className="flex h-[894px] shrink-0">
        <Sidebar />
        <div className="flex w-3 shrink-0 justify-center border-r border-[#dadce0] bg-[#fbfbfb] pl-px pt-[444px]">
          <svg width="4" height="7"><path d="M.5 0V7M3.500 0V7" stroke="#555" /></svg>
        </div>
        <Canvas />
        <FormatPanel />
      </div>
      <Taskbar />
    </div>
  );
}
